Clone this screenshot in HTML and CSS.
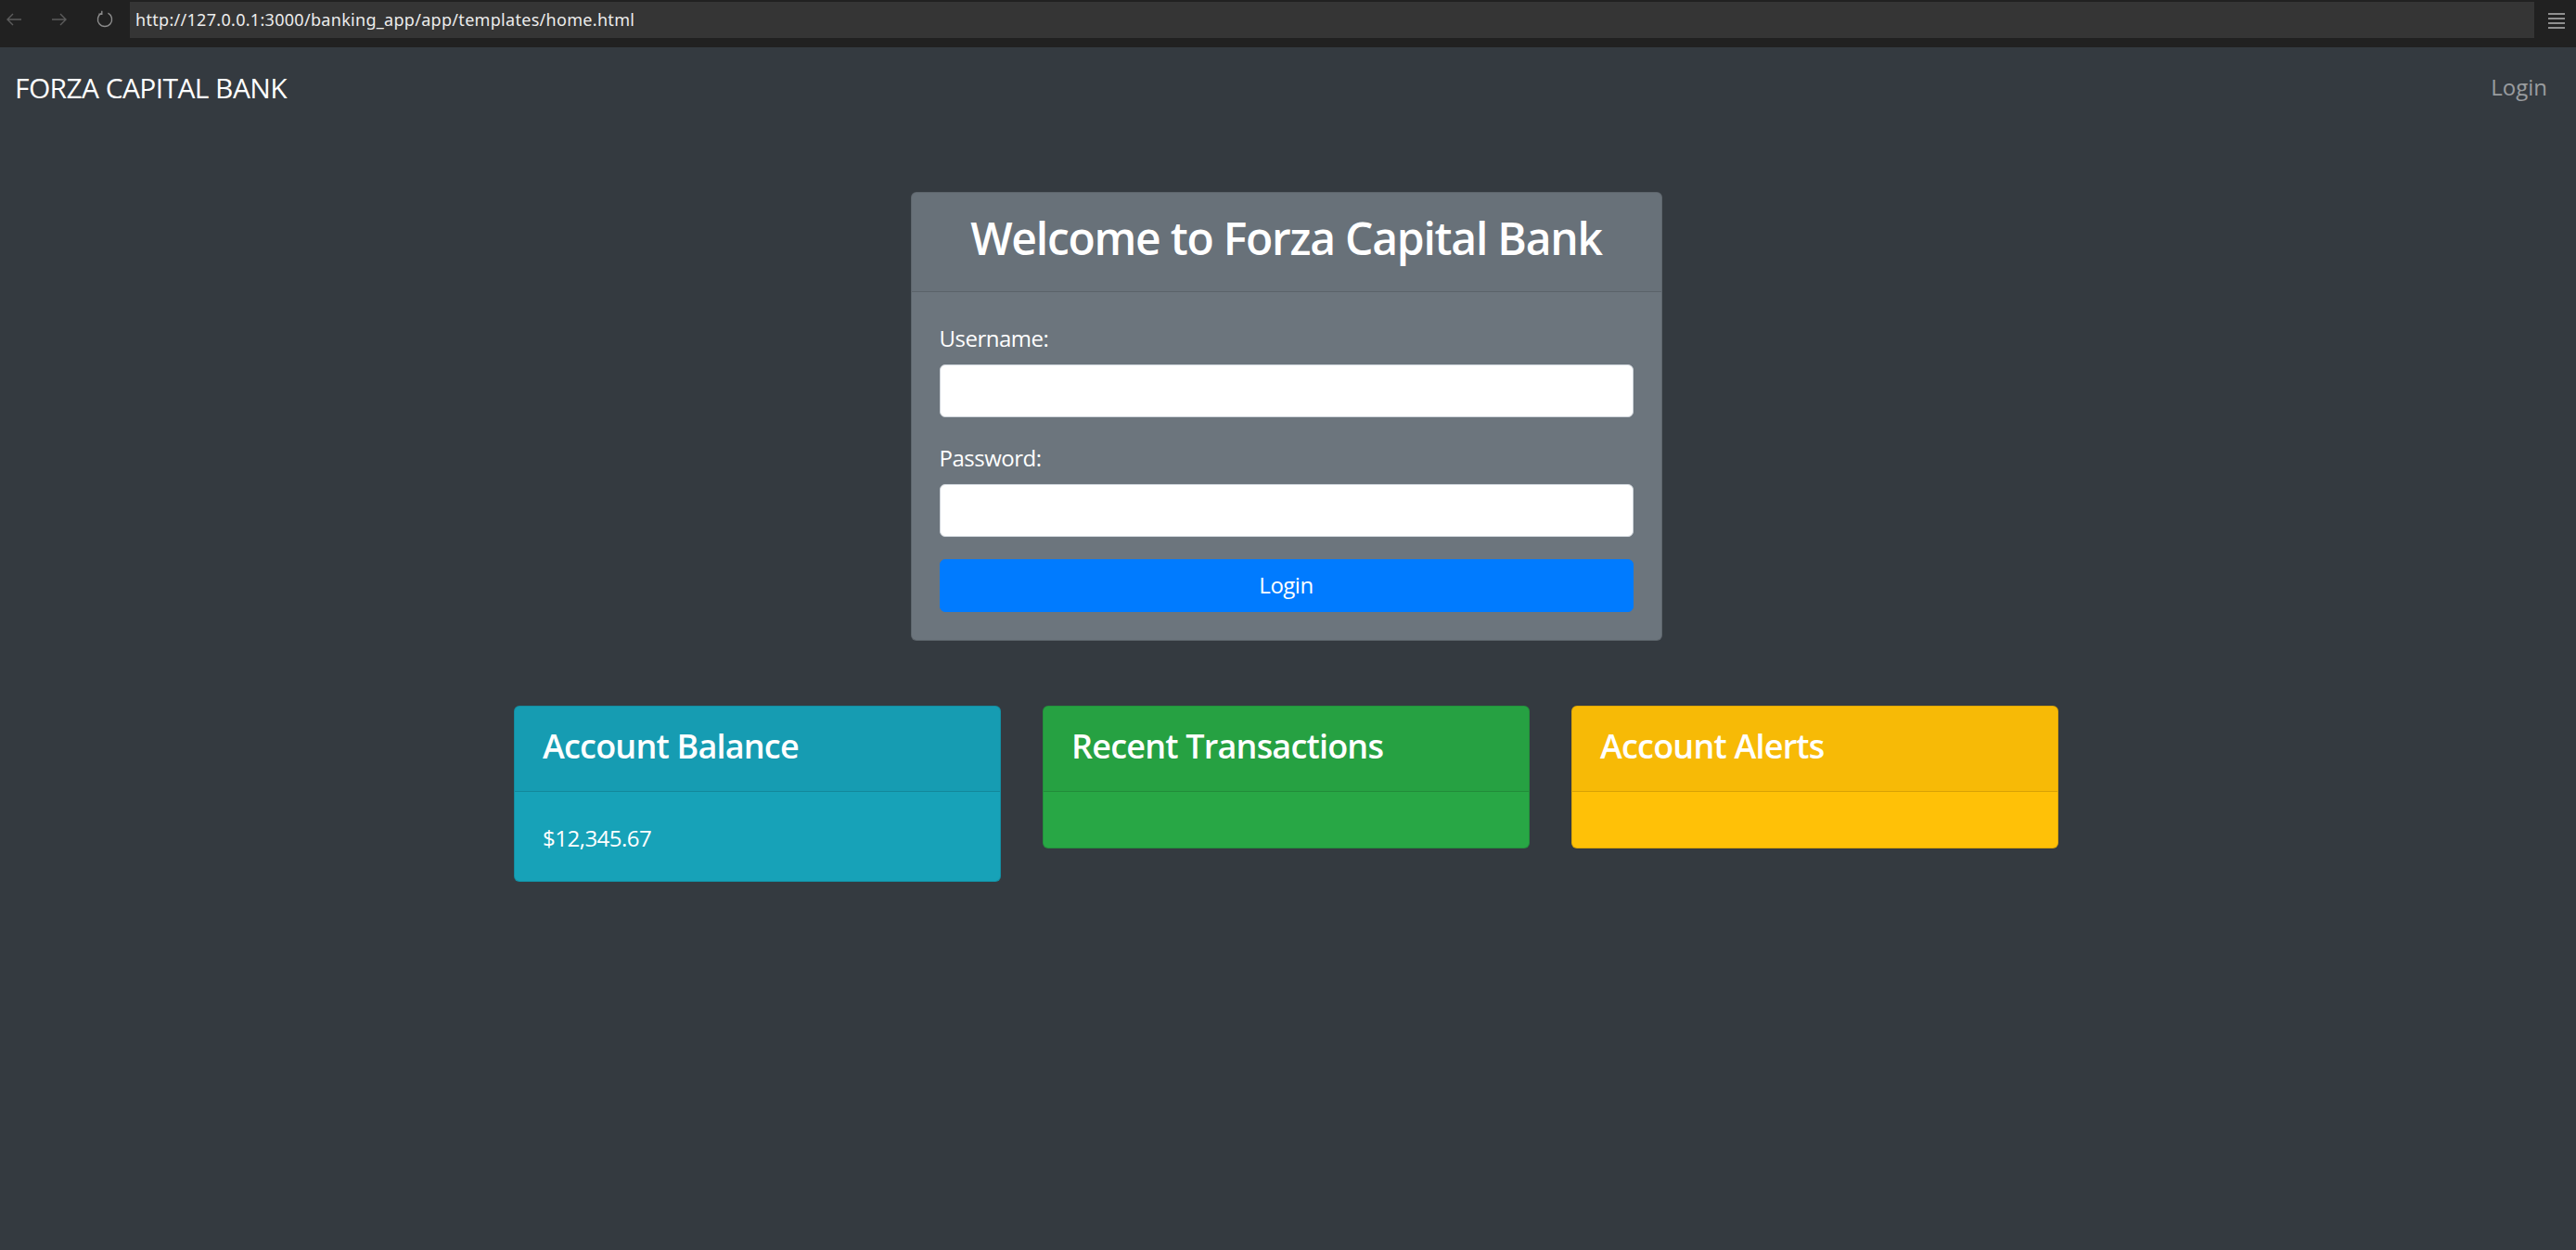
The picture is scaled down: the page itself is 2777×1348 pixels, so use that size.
FILE: index.html
```html
<!DOCTYPE html>
<html lang="en">
<head>
<meta charset="utf-8">
<title>Forza Capital Bank</title>
<link rel="stylesheet" href="styles.css">
</head>
<body>
<div class="chrome">
  <div class="chrome-btns">
    <svg class="ic ic-dim" width="20" height="20" viewBox="0 0 20 20"><path d="M18 10H3M9 4l-6 6 6 6" fill="none" stroke="currentColor" stroke-width="1.4"/></svg>
    <svg class="ic ic-dim" width="20" height="20" viewBox="0 0 20 20"><path d="M2 10h15M11 4l6 6-6 6" fill="none" stroke="currentColor" stroke-width="1.4"/></svg>
    <svg class="ic ic-reload" width="20" height="20" viewBox="0 0 20 20"><path d="M13.5 3.2A7.6 7.6 0 1 1 6.5 3.2M6.8 0.8v3.4H3.4" fill="none" stroke="currentColor" stroke-width="1.4"/></svg>
  </div>
  <div class="address">http://127.0.0.1:3000/banking_app/app/templates/home.html</div>
  <div class="chrome-menu">
    <span></span><span></span><span></span><span></span>
  </div>
</div>
<div class="page">
  <nav class="navbar">
    <a class="brand">FORZA CAPITAL BANK</a>
    <a class="nav-link">Login</a>
  </nav>
  <main class="container">
    <section class="card login-card">
      <div class="card-header login-header">
        <h2 class="login-title">Welcome to Forza Capital Bank</h2>
      </div>
      <div class="card-body">
        <form class="login-form">
          <div class="form-group">
            <label class="form-label">Username:</label>
            <input class="form-control" type="text">
          </div>
          <div class="form-group">
            <label class="form-label">Password:</label>
            <input class="form-control" type="password">
          </div>
          <button class="btn-primary" type="button">Login</button>
        </form>
      </div>
    </section>
    <div class="cards-row">
      <section class="card card-info">
        <div class="card-header"><h4 class="card-title">Account Balance</h4></div>
        <div class="card-body"><p class="card-text">$12,345.67</p></div>
      </section>
      <section class="card card-success">
        <div class="card-header"><h4 class="card-title">Recent Transactions</h4></div>
        <div class="card-body"></div>
      </section>
      <section class="card card-warning">
        <div class="card-header"><h4 class="card-title">Account Alerts</h4></div>
        <div class="card-body"></div>
      </section>
    </div>
  </main>
</div>
</body>
</html>
```
FILE: styles.css
```css
* { box-sizing: border-box; }
html, body { margin: 0; padding: 0; }
body {
  width: 2777px;
  height: 1348px;
  overflow: hidden;
  background: #343a40;
  font-family: "Open Sans", "Noto Sans", sans-serif;
  color: #fff;
}

/* browser chrome */
.chrome {
  height: 51px;
  background: #212121;
  display: flex;
  align-items: flex-start;
}
.chrome-btns {
  display: flex;
  align-items: center;
  gap: 29px;
  padding: 11px 0 0 5px;
  width: 140px;
}
.ic { display: block; }
.ic-dim { color: #5c5c5c; }
.ic-reload { color: #8c8c8c; }
.address {
  margin-top: 2px;
  height: 39px;
  width: 2592px;
  background: #353535;
  color: #ececec;
  font-family: "Noto Sans", "Open Sans", sans-serif;
  font-size: 18px;
  line-height: 39px;
  padding-left: 6px;
  letter-spacing: 0.3px;
}
.chrome-menu {
  margin-left: 15px;
  padding-top: 14px;
  display: flex;
  flex-direction: column;
  gap: 3px;
}
.chrome-menu span {
  display: block;
  width: 18px;
  height: 2px;
  background: #8f8f8f;
}

/* page */
.page {
  height: 1297px;
  background: #343a40;
  padding-right: 4px;
}
.navbar {
  height: 84px;
  display: flex;
  align-items: center;
  justify-content: space-between;
  padding: 13px 15px 11px 16px;
}
.brand {
  font-size: 30px;
  line-height: 45px;
  color: #fff;
  letter-spacing: -0.6px;
}
.nav-link {
  font-size: 24px;
  line-height: 36px;
  padding: 12px;
  color: rgba(255, 255, 255, 0.5);
}
.container {
  width: 1710px;
  margin: 0 auto;
  padding: 0 22.5px;
}

.card {
  border: 1px solid rgba(0, 0, 0, 0.125);
  border-radius: 6px;
  overflow: hidden;
}
.card-header {
  background: rgba(0, 0, 0, 0.03);
  border-bottom: 1px solid rgba(0, 0, 0, 0.125);
  padding: 21px 30px 15px;
}
.login-header { padding: 20px 30px 16px; }
.card-body { padding: 30px; }

.login-card {
  width: 810px;
  margin: 72px auto 0;
  background: #6c757d;
}
.login-title {
  margin: 0 0 12px;
  font-size: 48px;
  line-height: 57.6px;
  font-weight: 600;
  text-align: center;
  letter-spacing: -1.25px;
}
.login-form { margin: 0; }
.form-group { margin-bottom: 24px; }
.form-label {
  display: block;
  font-size: 24px;
  line-height: 36px;
  padding-top: 2px;
  margin-bottom: 10px;
  letter-spacing: -0.5px;
}
.form-control {
  display: block;
  width: 100%;
  height: 57px;
  border: 1.5px solid #ced4da;
  border-radius: 6px;
  background: #fff;
  padding: 9px 18px;
  font-size: 24px;
}
.btn-primary {
  display: block;
  width: 100%;
  height: 57px;
  border: 1px solid #007bff;
  border-radius: 6px;
  background: #007bff;
  color: #fff;
  font-family: inherit;
  font-size: 24px;
  line-height: 36px;
  letter-spacing: -0.5px;
}

.cards-row {
  margin-top: 70px;
  display: grid;
  grid-template-columns: repeat(3, 1fr);
  gap: 45px;
  align-items: start;
}
.card-title {
  margin: 0 0 12px;
  font-size: 36px;
  line-height: 43.2px;
  font-weight: 600;
  letter-spacing: -0.8px;
}
.card-text {
  margin: 0;
  padding-top: 2px;
  margin-bottom: -2px;
  font-size: 24px;
  line-height: 36px;
  letter-spacing: -0.5px;
}
.card-info { background: #17a2b8; }
.card-success { background: #28a745; }
.card-warning { background: #ffc107; }
```
